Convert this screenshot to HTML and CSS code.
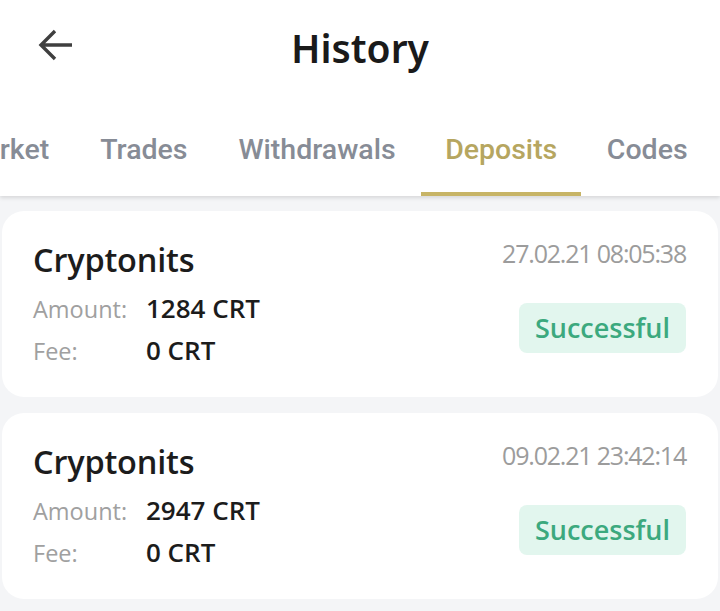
FILE: index.html
```html
<!DOCTYPE html>
<html lang="en">
<head>
    <meta charset="UTF-8">
    <meta name="viewport" content="width=device-width, initial-scale=1.0">
    <title>History</title>
    <link rel="stylesheet" href="styles.css">
</head>
<body>
    <div class="top">
        <div class="bar">
            <span class="back">
                <svg width="36" height="36" viewBox="0 0 36 36">
                    <path d="M34 18H4M17 4L3 18l14 14" fill="none" stroke="#3f3f3f" stroke-width="3.4"/>
                </svg>
            </span>
            <h1>History</h1>
        </div>
        <div class="tabs">
            <div class="tab-list">
                <span class="tab">Market</span>
                <span class="tab">Trades</span>
                <span class="tab">Withdrawals</span>
                <span class="tab active">Deposits</span>
                <span class="tab">Codes</span>
            </div>
        </div>
    </div>
    <div class="lista">
        <div class="card">
            <div class="info">
                <div class="nombre">Cryptonits</div>
                <div class="fila"><span class="etq">Amount:</span><span class="valor">1284 CRT</span></div>
                <div class="fila"><span class="etq">Fee:</span><span class="valor">0 CRT</span></div>
            </div>
            <div class="lado">
                <div class="fecha">27.02.21 08:05:38</div>
                <div class="estado">Successful</div>
            </div>
        </div>
        <div class="card">
            <div class="info">
                <div class="nombre">Cryptonits</div>
                <div class="fila"><span class="etq">Amount:</span><span class="valor">2947 CRT</span></div>
                <div class="fila"><span class="etq">Fee:</span><span class="valor">0 CRT</span></div>
            </div>
            <div class="lado">
                <div class="fecha">09.02.21 23:42:14</div>
                <div class="estado">Successful</div>
            </div>
        </div>
    </div>
</body>
</html>
```

FILE: styles.css
```css
body {
    margin: 0;
    font-family: "Noto Sans", sans-serif;
    background: #f4f5f7;
    height: 611px;
    overflow: hidden;
}
.top {
    background: #fff;
    box-shadow: 0 2px 4px rgba(0, 0, 0, 0.12);
    position: relative;
}
.bar {
    height: 96px;
    display: flex;
    align-items: center;
    justify-content: center;
    position: relative;
}
.back {
    position: absolute;
    left: 38px;
    top: 27px;
    line-height: 0;
}
h1 {
    margin: 0;
    font-size: 39px;
    font-weight: 600;
    color: #1a1a1a;
    padding-bottom: 2px;
}
.tabs {
    overflow: hidden;
}
.tab-list {
    display: flex;
    margin-left: -66px;
    white-space: nowrap;
}
.tab {
    font-family: Roboto, sans-serif;
    font-weight: 500;
    font-size: 28.5px;
    color: #878c96;
    padding: 0 25.5px;
    line-height: 108px;
    box-sizing: border-box;
    height: 100px;
    border-bottom: 4px solid transparent;
}
.active {
    color: #b6a660;
    border-bottom-color: #c7b466;
    padding: 0 24px;
}
.lista {
    padding: 15px 2px 0;
    display: flex;
    flex-direction: column;
    gap: 16px;
}
.card {
    font-family: "Open Sans", sans-serif;
    background: #fff;
    border-radius: 22px;
    height: 186px;
    box-sizing: border-box;
    padding: 26px 32px 0 31px;
    display: flex;
    justify-content: space-between;
}
.nombre {
    font-size: 32.5px;
    font-weight: 600;
    color: #1c1c1c;
    margin-bottom: 8px;
    letter-spacing: -0.2px;
}
.fila {
    display: flex;
    align-items: baseline;
    height: 42px;
}
.etq {
    width: 113px;
    font-size: 23.5px;
    color: #a0a0a0;
}
.valor {
    font-size: 26px;
    font-weight: 600;
    color: #1c1c1c;
}
.lado {
    display: flex;
    flex-direction: column;
    align-items: flex-end;
}
.fecha {
    font-size: 25px;
    color: #9c9c9c;
    letter-spacing: -1.2px;
    margin-top: -1px;
}
.estado {
    margin-top: 33px;
    background: #e2f6ee;
    color: #3ca97e;
    font-size: 27px;
    font-weight: 600;
    border-radius: 8px;
    padding: 0 16px;
    height: 50px;
    line-height: 50px;
}
```
